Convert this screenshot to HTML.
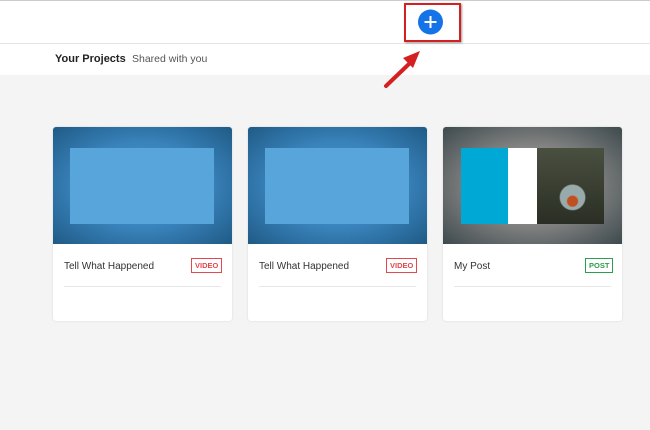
<!DOCTYPE html>
<html><head><style>
body{margin:0;width:650px;height:430px;background:#f4f4f4;font-family:"Liberation Sans",sans-serif;position:relative;overflow:hidden}
.top{position:absolute;left:0;top:0;width:650px;height:44px;background:#fff;border-top:1px solid #ccc;border-bottom:1px solid #e4e4e4;box-sizing:border-box}
.tabs{position:absolute;left:0;top:44px;width:650px;height:31px;background:#fff}
.tab{position:absolute;top:9px;font-size:11px;color:#555}
.card{position:absolute;top:127px;width:179px;height:194px;background:#fff;border-radius:3px;box-shadow:0 0 2px rgba(0,0,0,.12);overflow:hidden}
.th{position:absolute;left:0;top:0;width:179px;height:117px;background:radial-gradient(ellipse at center,#5a9fd4 0%,#3a84bd 50%,#1f5a85 100%)}
.in{position:absolute;left:17px;top:21px;width:144px;height:76px;background:#58a5dc}
.t{position:absolute;left:11px;top:134px;font-size:10px;color:#333}
.b{position:absolute;top:131px;font-size:7.5px;font-weight:bold;padding:2px 3px;border:1px solid}
.ln{position:absolute;left:11px;right:11px;top:159px;border-top:1px solid #e8e8e8}
</style></head><body>
<div class="top"></div>
<div class="tabs">
<div class="tab" style="left:55px;color:#222;font-weight:bold">Your Projects</div>
<div class="tab" style="left:132px;font-size:10.5px">Shared with you</div>
</div>
<div style="position:absolute;left:404px;top:3px;width:53px;height:35px;border:2px solid #d42020;box-shadow:1px 1px 2px rgba(0,0,0,.4)"></div>
<svg style="position:absolute;left:0;top:0" width="650" height="430"><circle cx="430.5" cy="22" r="12.5" fill="#1473e6"/><path d="M430.5 16v12M424.5 22h12" stroke="#fff" stroke-width="2"/><line x1="386" y1="86" x2="410" y2="63" stroke="#d42020" stroke-width="4" stroke-linecap="round"/><polygon points="420,51 403,58 413,68" fill="#d42020"/></svg>
<div class="card" style="left:53px"><div class="th"><div class="in"></div></div><div class="t">Tell What Happened</div><div class="b" style="left:138px;color:#e34850;border-color:#e34850">VIDEO</div><div class="ln"></div></div>
<div class="card" style="left:248px"><div class="th"><div class="in"></div></div><div class="t">Tell What Happened</div><div class="b" style="left:138px;color:#e34850;border-color:#e34850">VIDEO</div><div class="ln"></div></div>
<div class="card" style="left:443px"><div class="th" style="background:radial-gradient(ellipse at center,#c4c4c4 0%,#808080 50%,#3d4a4d 100%)"><div class="in" style="left:18px;width:143px;background:radial-gradient(circle at 78% 70%,#c05020 0 4%,transparent 5%),radial-gradient(circle at 78% 65%,#9aa 0 10%,transparent 11%),linear-gradient(90deg,#00a8d6 0 33%,#fff 33% 53%,transparent 53%),linear-gradient(180deg,#4a5040,#2a2e24)"></div></div><div class="t">My Post</div><div class="b" style="left:142px;color:#2d9d4f;border-color:#2d9d4f">POST</div><div class="ln"></div></div>
</body></html>
